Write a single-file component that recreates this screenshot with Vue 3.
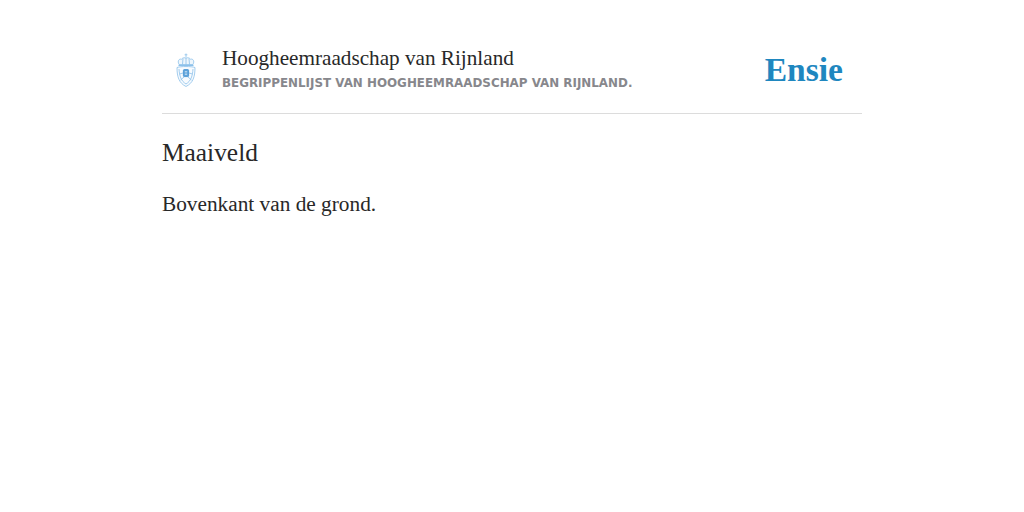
<script setup>
const org = 'Hoogheemraadschap van Rijnland'
const subtitle = 'Begrippenlijst van Hoogheemraadschap van Rijnland.'
</script>

<template>
  <div class="page">
    <header class="head">
      <div class="logo">
        <svg width="20" height="34" viewBox="0 0 20 34" fill="none" stroke="#8cc0ea" stroke-width="0.8">
          <path d="M10 0.5V4M8.6 1.8h2.8" />
          <path d="M3 11.5C1.2 8 3 5.5 5.5 6.2 6.5 4.8 8.5 4.4 10 5 11.5 4.4 13.5 4.8 14.5 6.2 17 5.5 18.8 8 17 11.5Z" fill="#eef6fc" />
          <path d="M7 5.5 6.5 11.5M10 5V11.5M13 5.5 13.5 11.5" />
          <path d="M2.5 12.5H17.5" stroke-width="1.2" />
          <path d="M1 14.5C1 24 3 30 10 33.5 17 30 19 24 19 14.5 15 13.2 5 13.2 1 14.5Z" fill="#f8fbfe" />
          <path d="M3 16C3.5 23 5 28 10 31 15 28 16.5 23 17 16" />
          <path d="M4.5 27 8 24M15.5 27 12 24M3.5 21 7 20M16.5 21 13 20" />
          <rect x="7.4" y="16.6" width="5.2" height="7" rx="0.8" fill="#5ea3da" stroke="#3f8fd0" />
          <path d="M8.8 18.5h2.4M8.8 20h2.4M8.8 21.5h2.4" stroke="#d5e8f7" stroke-width="0.7" />
        </svg>
      </div>
      <div class="titles">
        <div class="org">{{ org }}</div>
        <div class="sub">{{ subtitle }}</div>
      </div>
      <a class="brand">Ensie</a>
    </header>
    <main class="entry">
      <h1 class="term">Maaiveld</h1>
      <p class="def">Bovenkant van de grond.</p>
    </main>
  </div>
</template>

<style scoped>
.page {
  width: 700px;
  margin: 0 auto;
  padding-top: 44px;
  font-family: "Liberation Serif", "DejaVu Serif", serif;
  color: #282828;
}
.head {
  display: flex;
  align-items: flex-start;
  height: 70px;
  border-bottom: 1px solid #dcdcdc;
  box-sizing: border-box;
}
.logo {
  width: 60px;
  flex: none;
  padding: 9px 0 0 14px;
  box-sizing: border-box;
}
.titles {
  flex: 1;
  padding-top: 0;
}
.org {
  font-size: 21.2px;
  line-height: 28px;
}
.sub {
  font-family: "DejaVu Sans", sans-serif;
  font-size: 11.9px;
  font-weight: 700;
  line-height: 18px;
  margin-top: 2px;
  color: #87878c;
  text-transform: uppercase;
}
.brand {
  font-size: 33.6px;
  font-weight: 700;
  line-height: 44px;
  color: #1f87bf;
  margin: 4px 19px 0 0;
}
.entry {
  padding-top: 23px;
}
.term {
  margin: 0;
  font-size: 25.4px;
  font-weight: 400;
  line-height: 30px;
}
.def {
  margin: 22px 0 0;
  font-size: 21.3px;
  line-height: 30px;
}
</style>
